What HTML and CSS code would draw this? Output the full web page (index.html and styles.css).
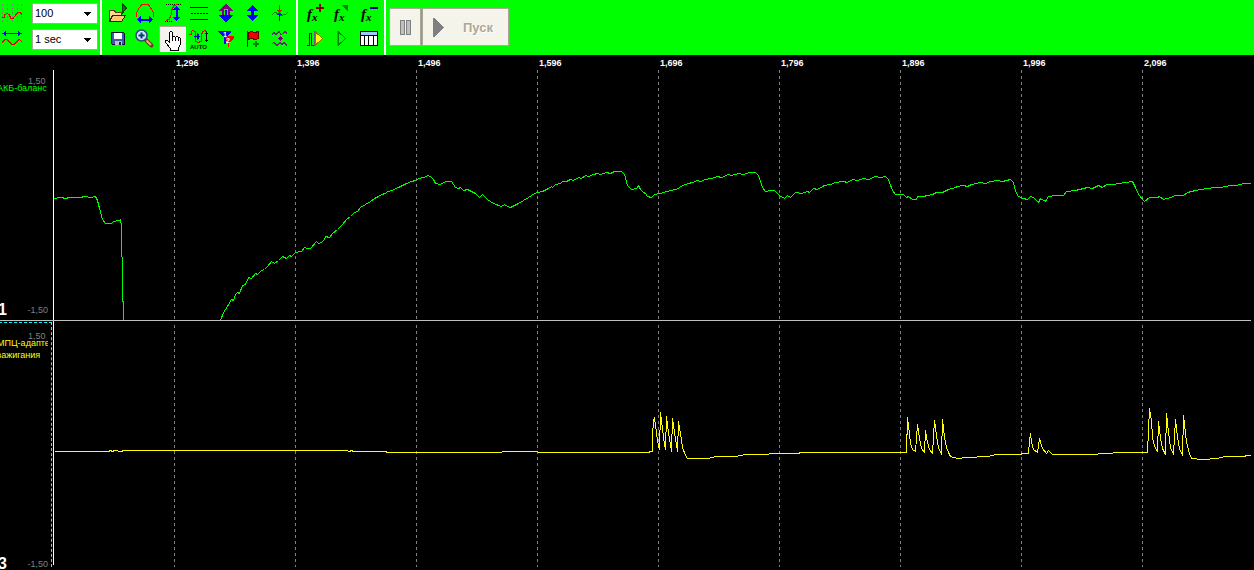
FILE: index.html
```
<!DOCTYPE html>
<html lang="ru">
<head>
<meta charset="utf-8">
<title>Осциллограф</title>
<link rel="stylesheet" href="styles.css">
</head>
<body>
<header class="toolbar">
  <div class="scales">
    <label class="scale-icon" for="amplitude" title="Масштаб">
      <svg class="icon" viewBox="0 0 24 26"><path d="M2.500 4v18M7.500 4v18M12.500 4v18M17.500 4v18M21.500 4v18" stroke="#808080" stroke-dasharray="2 2" fill="none"/><path d="M2 17.500h2l1-3 2-1 2 1 2 4 2 0 3-4 2-2 2 0 2 2" stroke="#e00000" fill="none"/></svg>
    </label>
    <div class="combo">
      <select id="amplitude"><option>100</option><option>200</option></select>
      <svg class="combo-arrow" viewBox="0 0 7 4"><path d="M0 0h7v1H6v1H5v1H4v1H3V3H2V2H1V1H0z"/></svg>
    </div>
    <label class="scale-icon" for="sweep" title="Развёртка">
      <svg class="icon" viewBox="0 0 24 26"><path d="M2 7.500h20M5.500 5v5M18.500 5v5M4.500 6v3M19.500 6v3" stroke="#0000ff" fill="none"/><path d="M2 16.500l3-3 2 0 5 5 2 0 5-5 3 2" stroke="#e00000" fill="none"/></svg>
    </label>
    <div class="combo">
      <select id="sweep"><option>1 sec</option><option>2 sec</option></select>
      <svg class="combo-arrow" viewBox="0 0 7 4"><path d="M0 0h7v1H6v1H5v1H4v1H3V3H2V2H1V1H0z"/></svg>
    </div>
  </div>

  <div class="tools tools-view">
    <button class="tool" aria-label="Открыть"><svg class="icon" viewBox="0 0 27 26"><path d="M4.500 21.500v-11h5l1 2h6v3" fill="#ffd890" stroke="#604010"/><path d="M4.500 21.500l3-6h13l-4 6z" fill="#ffc870" stroke="#302008"/><path d="M17.500 4v9l4-5z" fill="#008000" stroke="#004000"/></svg></button>
    <button class="tool" aria-label="Период"><svg class="icon" viewBox="0 0 27 26"><path d="M4.500 17v-4l2-4 3-4 2-1h3l2 1 3 4 2 4v4" fill="none" stroke="#ff0000"/><path d="M5 19.500l4-4v3h8v-3l4 4-4 4v-3H9v3z" fill="#0000ff"/></svg></button>
    <button class="tool" aria-label="Амплитуда"><svg class="icon" viewBox="0 0 27 26"><path d="M7 4.500h16M6 21.500h8" stroke="#000" stroke-dasharray="1 1"/><path d="M7 20.500l3-1 2-4 1-6 2-4 4-1" fill="none" stroke="#ff0000"/><path d="M17.500 6l4 4h-3v7h3l-4 4-4-4h3v-7h-3z" fill="#0000ff"/></svg></button>
    <button class="tool" aria-label="Линии уровня"><svg class="icon" viewBox="0 0 27 26"><path d="M4 7.500h18M4 19.500h18" stroke="#000"/><path d="M5 13.500h17" stroke="#000" stroke-dasharray="2 1"/></svg></button>
    <button class="tool" aria-label="Растянуть все"><svg class="icon" viewBox="0 0 27 26"><path d="M13 4l7 6v1h-3v5H9v-5H6v-1z" fill="#800080"/><path d="M13 22l7-6v-1h-3H9H6v1z" fill="#0000ff"/><path d="M11 9h4v6h-4z" fill="#00ff00"/><path d="M12 10h2v6h-2z" fill="#0000ff"/></svg></button>
    <button class="tool" aria-label="Растянуть"><svg class="icon" viewBox="0 0 27 26"><path d="M12.500 5l5.500 5v1h-4v4h4v1l-5.500 5L7 16v-1h4v-4H7v-1z" fill="#0000ff"/></svg></button>
    <button class="tool" aria-label="Нулевой уровень"><svg class="icon" viewBox="0 0 27 26"><path d="M5 14.500l3-2 3 1 3 2 4-1 3-2" fill="none" stroke="#008000"/><path d="M12.500 5v8M10.500 10v1M11.500 10v2M13.500 10v2M14.500 10v1" stroke="#ff0000"/><path d="M12.500 13v8M11.500 13v2M13.500 13v2M10.500 14v1M14.500 14v1" stroke="#0000ff"/></svg></button>
    <button class="tool" aria-label="Сохранить"><svg class="icon" viewBox="0 0 27 26"><path d="M6.500 6.500h12l1 1v11h-12l-1-1z" fill="#4058a8" stroke="#101030"/><path d="M9 7h8v6H9z" fill="#fff"/><path d="M10 15h7v4h-7z" fill="#c0c0c0"/><path d="M14 16h2v3h-2z" fill="#202040"/></svg></button>
    <button class="tool" aria-label="Увеличить"><svg class="icon smooth" viewBox="0 0 27 26"><path d="M13.500 13.500l6 6" stroke="#604020" stroke-width="4" stroke-linecap="round"/><path d="M14.500 14.500l4.500 4.500" stroke="#e8b070" stroke-width="2"/><circle cx="9.500" cy="9.500" r="5.500" fill="#c8e8ff" stroke="#304878" stroke-width="1.500"/><path d="M9.500 6.500v6M6.500 9.500h6" stroke="#103880" stroke-width="2"/></svg></button>
    <button class="tool pressed" aria-label="Рука" aria-pressed="true"><svg class="icon" viewBox="0 0 27 26"><path d="M10.500 16.500v-10l1-1h1l1 1v5l1-1h1l1 1 1-1h1l1 1 1 0 1 1v6l-2 3v3h-8v-2l-5-6v-2h2z" fill="#fff" stroke="#000"/><path d="M13.500 11v4M16.500 12v3M19.500 12v3" stroke="#000"/></svg></button>
    <button class="tool" aria-label="Автомасштаб"><svg class="icon" viewBox="0 0 27 26"><path d="M3 8.500h2v-3l2-1 2 1v6l1 4 2 1 3-1v-6l2-4 2-1 2 2" fill="none" stroke="#e00000"/><path d="M8 10.500h6M12.500 8v5M11.500 7v7" stroke="#0000c0"/><path d="M20.500 6v10M19 7.500h3M19 14.500h3" stroke="#000"/><text x="4" y="23" class="tiny">AUTO</text></svg></button>
    <button class="tool" aria-label="Маркеры"><svg class="icon" viewBox="0 0 27 26"><path d="M12 10h9v2l-5 5v4h-1v-4z" fill="#ff0000"/><path d="M5 5h13v1l-5 6v6h-2v-6L5 6z" fill="#0000ff"/><path d="M12 11h6v5h-4z" fill="#ff0000"/><text x="10" y="11" class="mark">1</text><text x="13" y="17" class="mark">2</text></svg></button>
    <button class="tool" aria-label="Добавить флаг"><svg class="icon" viewBox="0 0 27 26"><path d="M8.500 6.500l3-1 3 1 4-1v7l-3 1-4-1-3 1z" fill="#f00000" stroke="#600000"/><path d="M7.500 5v16" stroke="#600000"/><path d="M13 18h6M16 15v6" stroke="#008000" stroke-width="2"/></svg></button>
    <button class="tool" aria-label="Сравнение"><svg class="icon" viewBox="0 0 27 26"><path d="M5 8.500l2-2 2 2 3-3 2 3 2-1 2-2 2 2M5 17.500l2-1 3 3 3-3 2 2 2-2 3 3" fill="none" stroke="#702070"/><path d="M11 12.500h5M13.500 10v5M12.500 11v3M14.500 11v3" stroke="#800080"/></svg></button>
  </div>

  <div class="tools tools-math">
    <button class="tool" aria-label="Добавить функцию"><svg class="icon" viewBox="0 0 27 26"><text x="6" y="19" class="fn">f</text><text x="11" y="21" class="fn-arg">x</text><path d="M15 8h8M19 4v8" stroke="#800000" stroke-width="2"/></svg></button>
    <button class="tool" aria-label="Изменить функцию"><svg class="icon" viewBox="0 0 27 26"><text x="6" y="19" class="fn">f</text><text x="11" y="21" class="fn-arg">x</text><path d="M13 5h7v7z" fill="#008000"/></svg></button>
    <button class="tool" aria-label="Удалить функцию"><svg class="icon" viewBox="0 0 27 26"><text x="6" y="19" class="fn">f</text><text x="11" y="21" class="fn-arg">x</text><path d="M15 8h8" stroke="#000080" stroke-width="2"/></svg></button>
    <button class="tool" aria-label="Воспроизвести фрагмент"><svg class="icon" viewBox="0 0 27 26"><path d="M6 19.500h2.500V7.500h2v12H13" fill="none" stroke="#0000a0"/><path d="M14.500 6v13l7-6.500z" fill="#ffff00" stroke="#808000"/><path d="M13.500 5v15" stroke="#606080"/></svg></button>
    <button class="tool" aria-label="Воспроизвести"><svg class="icon" viewBox="0 0 27 26"><path d="M10.500 6v13l7-6.500z" fill="none" stroke="#008000"/><path d="M9.500 5v15" stroke="#608060"/></svg></button>
    <button class="tool" aria-label="Таблица"><svg class="icon" viewBox="0 0 27 26"><path d="M5.500 5.500h17v14h-17z" fill="#fff" stroke="#000"/><path d="M6 6h16v3H6z" fill="#a0c8ff"/><path d="M6 9.500h16M9.500 9v10M13.500 9v10M18.500 9v10" stroke="#000"/></svg></button>
  </div>

  <div class="run">
    <button class="run-button pause" disabled aria-label="Пауза"><svg viewBox="0 0 11 15"><path d="M.500.500h4v14h-4zM6.500.500h4v14h-4z" fill="#c0c0c0" stroke="#808080"/></svg></button>
    <button class="run-button start" disabled><svg viewBox="0 0 11 19"><path d="M0 0h1l10 9v1L1 19H0z" fill="#808080"/></svg><span>Пуск</span></button>
  </div>
</header>

<main class="scope">
  <div class="time-axis">
    <span></span><span>1,296</span><span>1,396</span><span>1,496</span><span>1,596</span><span>1,696</span><span>1,796</span><span>1,896</span><span>1,996</span><span>2,096</span>
  </div>

  <section class="channel channel-1">
    <div class="legend">
      <div class="range-top">1,50</div>
      <div class="name">АКБ-баланс</div>
      <div class="legend-foot"><b>1</b><span>-1,50</span></div>
    </div>
    <svg class="plot" viewBox="53 70 1198 250" preserveAspectRatio="none">
      <path class="grid" d="M174.500 70v250M295.500 70v250M416.500 70v250M537.500 70v250M658.500 70v250M779.500 70v250M900.500 70v250M1021.500 70v250M1142.500 70v250"/>
      <path class="axis" d="M53.500 70v250"/>
      <polyline class="trace green" transform="translate(.5 .5)" points="54,198 60,197 66,198 68,197 80,197 84,196 90,197 95,196 97,200 99,208 102,219 105,223 111,223 113,221 119,220 120,219 121,226 121,256 122,257 122,300 123,302 123,321"/>
      <polyline class="trace green" transform="translate(.5 .5)" points="220,320 223,312 227,306 231,299 233,300 235,294 237,292 239,293 242,285 245,284 248,277 251,278 255,273 257,274 261,270 264,269 267,266 271,261 274,263 278,260 282,256 286,258 289,255 291,256 295,252 301,251 304,247 307,248 310,248 316,241 318,243 323,241 325,236 329,237 332,233 337,229 342,224 346,219 350,216 354,212 357,211 360,207 365,204 370,201 374,198 378,196 381,194 385,193 387,191 392,190 395,188 398,187 402,185 406,183 411,181 415,180 418,178 423,177 428,175 431,177 433,179 435,183 440,184 443,182 446,181 451,181 455,187 458,188 460,187 463,190 467,189 471,191 475,193 479,197 482,194 487,199 493,203 501,206 504,204 507,206 510,207 514,205 518,203 523,200 528,197 534,193 537,192 542,191 548,188 551,186 552,187 555,184 560,183 562,181 566,181 570,179 573,180 578,177 581,178 585,175 588,176 593,174 597,173 600,174 606,172 610,173 614,171 621,171 624,174 627,185 631,189 636,188 638,185 640,189 643,192 645,193 647,196 651,197 654,194 660,193 663,192 670,190 676,189 682,185 688,183 692,182 697,180 700,181 705,179 711,178 717,176 721,177 728,174 731,175 738,173 743,174 749,172 755,172 758,175 762,187 765,191 771,190 774,190 779,195 784,198 787,195 790,197 795,192 801,193 807,191 809,192 813,188 817,189 824,185 830,184 835,182 843,181 847,182 852,179 857,180 863,178 868,179 875,176 880,177 885,176 888,179 892,190 895,194 903,194 906,197 908,196 912,199 916,199 917,196 923,196 927,195 932,194 936,192 942,192 948,189 955,187 957,186 963,185 967,186 971,184 980,182 985,183 990,181 997,180 1002,181 1010,179 1013,182 1015,191 1018,196 1023,198 1027,199 1030,196 1033,197 1038,202 1040,198 1045,201 1048,196 1055,195 1063,195 1066,191 1075,190 1087,187 1092,188 1098,185 1102,187 1106,184 1113,184 1118,183 1125,182 1132,181 1135,187 1138,194 1144,201 1149,197 1157,197 1159,196 1163,199 1170,197 1175,195 1183,195 1187,192 1195,190 1207,188 1215,187 1220,187 1230,185 1236,185 1243,183 1251,183"/>
    </svg>
  </section>

  <section class="channel channel-2">
    <div class="legend selected">
      <div class="range-top">1,50</div>
      <div class="name">МПЦ-адаптер<br>зажигания</div>
      <div class="legend-foot"><b>3</b><span>-1,50</span></div>
    </div>
    <svg class="plot" viewBox="53 321 1198 249" preserveAspectRatio="none">
      <path class="grid" d="M174.500 325v242M295.500 325v242M416.500 325v242M537.500 325v242M658.500 325v242M779.500 325v242M900.500 325v242M1021.500 325v242M1142.500 325v242"/>
      <path class="axis" d="M53.500 321v244"/>
      <polyline class="trace yellow" transform="translate(.5 .5)" points="54,451 108,451 110,450 112,451 114,450 120,451 124,450 346,450 349,451 351,450 353,451 385,451 387,452 500,452 503,451 535,451 540,452 646,452 652,451 652,436 653,420 654,418 655,424 656,433 658,445 659,449 660,412 661,420 663,437 665,449 666,416 668,432 671,451 672,418 674,432 677,451 678,421 680,433 682,447 685,455 687,458 708,458 715,456 735,456 745,454 760,454 778,453 798,453 800,452 906,452 907,417 908,425 910,443 912,449 915,451 917,424 919,438 921,448 924,452 925,430 927,442 929,449 932,453 934,420 936,435 938,447 941,454 942,419 944,437 946,447 948,452 950,456 957,458 967,457 987,456 996,454 1020,454 1022,453 1028,453 1029,440 1030,433 1031,442 1033,449 1037,452 1039,438 1042,448 1046,453 1048,450 1052,454 1090,454 1105,453 1120,452 1147,452 1149,408 1151,420 1152,437 1154,446 1157,451 1158,421 1160,438 1162,448 1165,454 1166,413 1168,432 1170,447 1173,454 1175,419 1177,437 1179,448 1182,455 1183,415 1186,442 1189,453 1191,458 1202,459 1217,458 1224,456 1243,456 1247,455 1251,455"/>
    </svg>
  </section>
</main>
</body>
</html>
```
FILE: styles.css
```
* { box-sizing: border-box; }

body {
  margin: 0;
  min-height: 100vh;
  display: flex;
  flex-direction: column;
  background: #000;
  font-family: "Liberation Sans", Arial, sans-serif;
  overflow: hidden;
}

svg { display: block; shape-rendering: crispEdges; }
.smooth { shape-rendering: auto; }

.toolbar {
  display: flex;
  height: 55px;
  background: #00ff00;
}

.scales {
  display: grid;
  grid-template-columns: 24px 66px;
  grid-template-rows: 26px 26px;
  column-gap: 8px;
  align-content: start;
  align-items: center;
  padding-right: 2px;
}

.scale-icon .icon { width: 24px; height: 26px; }

.combo { position: relative; }

.combo select {
  display: block;
  width: 100%;
  height: 21px;
  padding: 0 16px 0 2px;
  border: 1px solid #aca899;
  border-radius: 0;
  background: #fff;
  color: #000;
  font: 11px "Liberation Sans", Arial, sans-serif;
  appearance: none;
}

.combo-arrow {
  position: absolute;
  top: 9px;
  right: 7px;
  width: 7px;
  height: 4px;
  pointer-events: none;
}

.tools {
  display: grid;
  grid-auto-rows: 26px;
  align-content: start;
  padding: 0 2px 0 3px;
  border-left: 2px solid #fff;
}

.tools-view { grid-template-columns: repeat(7, 27px); }
.tools-math { grid-template-columns: repeat(3, 27px); }

.tool {
  width: 27px;
  height: 26px;
  padding: 0;
  border: 0;
  background: none;
}

.tool .icon { width: 27px; height: 26px; }

.pressed {
  background: #f4f3ee;
  box-shadow: inset 1px 1px #aca899, inset -1px -1px #fff;
}

.tiny { font: bold 6px "Liberation Sans", sans-serif; }
.mark { font: bold 7px "Liberation Sans", sans-serif; fill: #fff; }
.fn { font: italic bold 15px "Liberation Serif", serif; }
.fn-arg { font: italic bold 11px "Liberation Serif", serif; }

.run {
  display: flex;
  align-items: flex-start;
  gap: 1px;
  padding: 8px 0 0 3px;
  border-left: 2px solid #fff;
}

.run-button {
  display: flex;
  align-items: center;
  height: 38px;
  border: 1px solid #aca899;
  border-radius: 1px;
  background: #f5f4ea;
  color: #aca899;
  font: bold 13px "Liberation Sans", Arial, sans-serif;
  text-shadow: 1px 1px #fff;
}

.pause { width: 32px; justify-content: center; padding: 0; }
.pause svg { width: 11px; height: 15px; }
.start { width: 87px; gap: 19px; padding: 0 10px; }
.start svg { width: 11px; height: 19px; }

.scope {
  flex: 1;
  display: grid;
  grid-template-rows: 15px 251fr 249fr;
  padding-right: 3px;
}

.time-axis {
  display: grid;
  grid-template-columns: repeat(9, 121fr) 109fr;
  margin-left: 53px;
  color: #fff;
  font-size: 9px;
  font-weight: bold;
  line-height: 16px;
}

.time-axis span { padding-left: 2px; }

.channel {
  display: grid;
  grid-template-columns: 53px 1fr;
  min-height: 0;
}

.channel-1 { border-bottom: 1px solid #c0c0c0; }

.legend {
  position: relative;
  display: flex;
  flex-direction: column;
  overflow: hidden;
  padding: 7px 5px 4px 0;
  color: #808080;
  font-size: 9px;
  line-height: 12px;
}

.channel-2 .legend { padding: 11px 5px 0 0; }

.range-top {
  padding-left: 28px;
  line-height: 8px;
}

.name {
  margin-top: -3px;
  margin-left: -3px;
  white-space: nowrap;
  overflow: hidden;
}

.channel-1 .name { color: #00ff00; }
.channel-2 .name { color: #ffff00; }

.legend-foot {
  display: flex;
  align-items: center;
  justify-content: space-between;
  margin-top: auto;
  margin-left: -2px;
  line-height: 12px;
}

.legend-foot b { color: #fff; font-size: 16px; }

.selected::before {
  content: "";
  position: absolute;
  inset: 1px 1px 3px -1px;
  border: 1px dashed #00ffff;
  border-width: 1px 1px 0 0;
}

.plot { width: 100%; height: 100%; min-height: 0; }
.plot path, .plot polyline { fill: none; vector-effect: non-scaling-stroke; }
.plot .grid { stroke: #808080; stroke-dasharray: 3 3; }
.plot .axis { stroke: #fff; }
.plot .green { stroke: #00ff00; }
.plot .yellow { stroke: #ffff00; }
```
